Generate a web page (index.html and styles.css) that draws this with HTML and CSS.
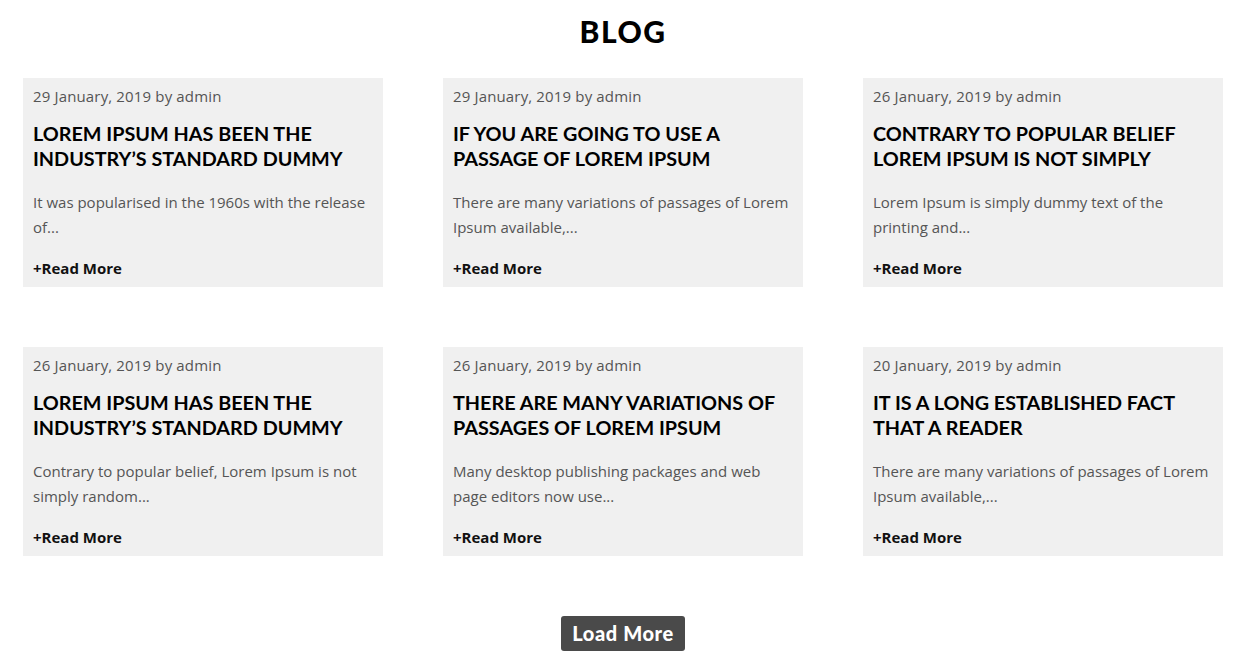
FILE: index.html
```html
<!DOCTYPE html>
<html>
<head>
<meta charset="utf-8">
<link rel="stylesheet" href="styles.css">
</head>
<body>
<section class="blog">
  <h1 class="blog-title">BLOG</h1>
  <div class="grid">
    <article class="card">
      <div class="meta">29 January, 2019 by admin</div>
      <h2 class="card-title">LOREM IPSUM HAS BEEN THE INDUSTRY’S STANDARD DUMMY</h2>
      <p class="excerpt">It was popularised in the 1960s with the release of...</p>
      <a class="more">+Read More</a>
    </article>
    <article class="card">
      <div class="meta">29 January, 2019 by admin</div>
      <h2 class="card-title">IF YOU ARE GOING TO USE A PASSAGE OF LOREM IPSUM</h2>
      <p class="excerpt">There are many variations of passages of Lorem Ipsum available,...</p>
      <a class="more">+Read More</a>
    </article>
    <article class="card">
      <div class="meta">26 January, 2019 by admin</div>
      <h2 class="card-title">CONTRARY TO POPULAR BELIEF LOREM IPSUM IS NOT SIMPLY</h2>
      <p class="excerpt">Lorem Ipsum is simply dummy text of the printing and...</p>
      <a class="more">+Read More</a>
    </article>
    <article class="card">
      <div class="meta">26 January, 2019 by admin</div>
      <h2 class="card-title">LOREM IPSUM HAS BEEN THE INDUSTRY’S STANDARD DUMMY</h2>
      <p class="excerpt">Contrary to popular belief, Lorem Ipsum is not simply random...</p>
      <a class="more">+Read More</a>
    </article>
    <article class="card">
      <div class="meta">26 January, 2019 by admin</div>
      <h2 class="card-title">THERE ARE MANY VARIATIONS OF PASSAGES OF LOREM IPSUM</h2>
      <p class="excerpt">Many desktop publishing packages and web page editors now use...</p>
      <a class="more">+Read More</a>
    </article>
    <article class="card">
      <div class="meta">20 January, 2019 by admin</div>
      <h2 class="card-title">IT IS A LONG ESTABLISHED FACT THAT A READER</h2>
      <p class="excerpt">There are many variations of passages of Lorem Ipsum available,...</p>
      <a class="more">+Read More</a>
    </article>
  </div>
  <div class="load-wrap"><button class="load">Load More</button></div>
</section>
</body>
</html>
```
FILE: styles.css
```css
html, body { margin: 0; padding: 0; background: #fff; }
body { font-family: "Open Sans", "Liberation Sans", sans-serif; }
.blog { padding: 0 29px 0 23px; }
.blog-title {
  margin: 0;
  padding-top: 13px;
  height: 78px;
  box-sizing: border-box;
  text-align: center;
  font-family: "Lato", "Liberation Sans", sans-serif;
  font-weight: 900;
  font-size: 30px;
  line-height: 36px;
  color: #000;
  letter-spacing: 1.5px;
}
.grid {
  display: grid;
  grid-template-columns: repeat(3, 360px);
  column-gap: 60px;
  row-gap: 60px;
}
.card {
  background: #f0f0f0;
  padding: 6px 10px 6px 10px;
  height: 209px;
  box-sizing: border-box;
}
.meta { font-size: 15px; line-height: 25px; color: #555; letter-spacing: 0.15px; }
.card-title {
  margin: 12px 0 0;
  font-family: "Lato", "Liberation Sans", sans-serif;
  font-weight: 700;
  font-size: 19.8px;
  line-height: 25px;
  color: #000;
  letter-spacing: 0;
}
.excerpt { margin: 19px 0 0; font-size: 15px; line-height: 25px; color: #555; }
.more { display: block; margin-top: 16px; font-size: 15px; line-height: 25px; font-weight: 700; color: #111; }
.load-wrap { display: flex; justify-content: center; padding-top: 60px; }
.load {
  width: 124px;
  height: 35px;
  background: #4a4a4a;
  color: #fff;
  border: none;
  border-radius: 3px;
  font-family: "Lato", "Liberation Sans", sans-serif;
  font-weight: 900;
  font-size: 20px;
  line-height: 33px;
  letter-spacing: 0.6px;
  padding: 0;
}
```
